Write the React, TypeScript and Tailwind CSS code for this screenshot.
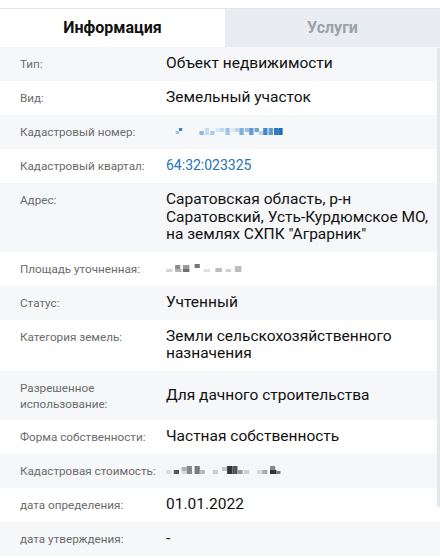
import React from "react";

type Cell = [number, number, number, number, string];

function Mosaic({ w, h, cells, sx = 1 }: { w: number; h: number; cells: Cell[]; sx?: number }) {
  return (
    <svg width={w} height={h} viewBox={`0 0 ${w} ${h}`} className="block">
      {cells.map(([x, y, cw, ch, c], i) => (
        <rect key={i} x={x * sx} y={y} width={cw * sx} height={ch} fill={c} />
      ))}
    </svg>
  );
}

const blueCells: Cell[] = [
  [9, 3, 3, 3, "#9cc4e4"],
  [12, 0, 3, 3, "#3b86c8"],
  [31, 3, 4, 4, "#8bb9df"],
  [36, 0, 4, 7, "#c6dcef"],
  [41, 3, 4, 4, "#a9cbe8"],
  [46, 0, 4, 4, "#d7e6f3"],
  [50, 0, 4, 4, "#c0d8ee"],
  [55, 0, 4, 7, "#9ec3e4"],
  [60, 0, 4, 4, "#dde9f5"],
  [64, 0, 4, 4, "#bcd6ed"],
  [68, 0, 4, 7, "#7fb1dc"],
  [73, 0, 4, 4, "#9fc2e3"],
  [77, 0, 4, 7, "#5e9bd2"],
  [82, 0, 4, 4, "#6aa3d5"],
  [86, 3, 4, 4, "#b7d3ec"],
  [90, 0, 4, 7, "#3f87c9"],
  [95, 0, 4, 7, "#5d9ad1"],
  [100, 0, 4, 7, "#2d79c2"],
  [104, 0, 4, 7, "#1c6fbd"],
];

const grayCells1: Cell[] = [
  [0, 5, 5, 3, "#d4d4d4"],
  [7, 1, 4, 4, "#8c8c8c"],
  [7, 5, 5, 3, "#b5b5b5"],
  [13, 1, 5, 4, "#9a9a9a"],
  [13, 5, 5, 3, "#6f6f6f"],
  [22, 0, 4, 4, "#777"],
  [29, 5, 5, 3, "#e0e0e0"],
  [38, 4, 5, 4, "#bdbdbd"],
  [46, 5, 4, 3, "#d0d0d0"],
  [53, 2, 5, 6, "#bdbdbd"],
];

const grayCells2: Cell[] = [
  [0, 4, 4, 4, "#dcdcdc"],
  [6, 4, 4, 4, "#555"],
  [12, 1, 4, 4, "#b0b0b0"],
  [12, 5, 4, 3, "#dadada"],
  [16, 0, 4, 8, "#888"],
  [22, 0, 4, 8, "#7b7b7b"],
  [26, 4, 4, 4, "#bbb"],
  [36, 4, 4, 4, "#cfcfcf"],
  [43, 1, 4, 4, "#c4c4c4"],
  [47, 0, 4, 8, "#333"],
  [51, 0, 4, 8, "#555"],
  [55, 4, 4, 4, "#9a9a9a"],
  [60, 4, 4, 4, "#cfcfcf"],
  [70, 4, 4, 4, "#d8d8d8"],
  [74, 4, 4, 4, "#aaa"],
  [80, 0, 4, 4, "#888"],
  [80, 4, 5, 4, "#333"],
  [85, 5, 3, 3, "#777"],
];

type Row = { label: React.ReactNode; value: React.ReactNode };

const rows: Row[] = [
  { label: "Тип:", value: "Объект недвижимости" },
  { label: "Вид:", value: "Земельный участок" },
  {
    label: "Кадастровый номер:",
    value: (
      <div className="py-[5px]">
        <Mosaic w={118} h={8} cells={blueCells} sx={1.08} />
      </div>
    ),
  },
  {
    label: "Кадастровый квартал:",
    value: <span className="text-[14px] text-[#1f73b7]">64:32:023325</span>,
  },
  {
    label: "Адрес:",
    value: 'Саратовская область, р-н Саратовский, Усть-Курдюмское МО, на землях СХПК "Аграрник"',
  },
  {
    label: "Площадь уточненная:",
    value: (
      <div className="py-[4px]">
        <Mosaic w={80} h={9} cells={grayCells1} sx={1.3} />
      </div>
    ),
  },
  { label: "Статус:", value: "Учтенный" },
  { label: "Категория земель:", value: "Земли сельскохозяйственного назначения" },
  { label: "Разрешенное использование:", value: "Для дачного строительства" },
  { label: "Форма собственности:", value: "Частная собственность" },
  {
    label: "Кадастровая стоимость:",
    value: (
      <div className="py-[4px]">
        <Mosaic w={118} h={9} cells={grayCells2} sx={1.3} />
      </div>
    ),
  },
  { label: "дата определения:", value: "01.01.2022" },
  { label: "дата утверждения:", value: "-" },
];

export default function App() {
  return (
    <div
      className="w-[440px] h-[558px] overflow-hidden bg-white relative"
      style={{ fontFamily: "Roboto, 'Liberation Sans', sans-serif" }}
    >
      <div className="h-[9px] border-b border-[#e4e6ea]" />
      <div className="flex h-[38px]">
        <div className="w-[225px] bg-white flex items-center justify-center text-[16px] font-bold text-[#111]">
          Информация
        </div>
        <div className="flex-1 bg-[#e9ecf0] flex items-center justify-center text-[16px] font-bold text-[#9ba1a9]">
          Услуги
        </div>
      </div>
      <div className="flex flex-col">
        {rows.map((r, i) => (
          <div
            key={i}
            className={`flex min-h-[34px] py-[8px] ${i % 2 === 0 ? "bg-[#f6f7f9]" : "bg-white"}`}
          >
            <div className="self-start w-[166px] shrink-0 pl-[20px] pr-[4px] pt-[1px] text-[11.7px] leading-[16px] text-[#6b6b6b]">
              {r.label}
            </div>
            <div className="self-center flex-1 text-[15.5px] leading-[17.6px] text-[#111]">{r.value}</div>
          </div>
        ))}
      </div>
      <div className="absolute right-0 top-[48px] w-[3px] h-[459px] bg-[#e6e7ea]" />
    </div>
  );
}
